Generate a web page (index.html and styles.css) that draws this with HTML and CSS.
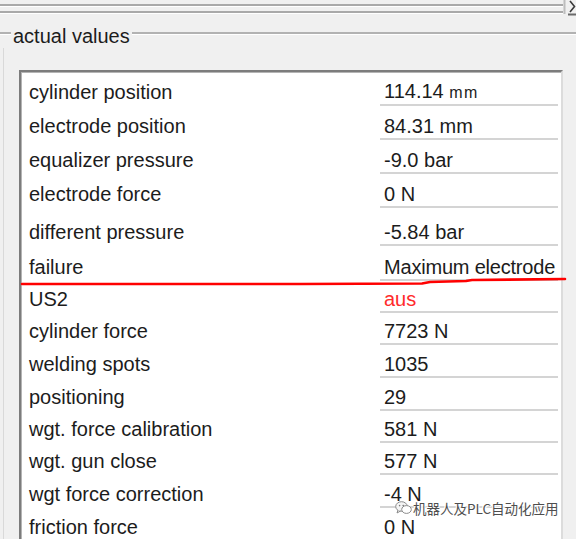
FILE: index.html
```html
<!DOCTYPE html>
<html lang="en">
<head>
<meta charset="utf-8">
<title>actual values</title>
<link rel="stylesheet" href="styles.css">
</head>
<body>
<div class="topbar">
  <div class="rails"><div class="rail"></div><div class="rail"></div></div>
  <div class="cap">
    <svg width="13" height="25" viewBox="0 0 13 25">
      <path d="M1.5 0 V14" stroke="#bdbdbd" stroke-width="2" fill="none"/>
      <path d="M7 1 L11.5 6.5 L7 12" stroke="#3a3a3a" stroke-width="1.6" fill="none"/>
      <path d="M5 14.5 H13" stroke="#6a6a6a" stroke-width="2" fill="none"/>
    </svg>
  </div>
</div>
<section class="group">
  <div class="group-head">
    <span class="edge edge-short"></span>
    <h2 class="legend">actual values</h2>
    <span class="edge edge-long"></span>
  </div>
  <div class="group-body">
    <div class="list">
      <div class="row"><span class="label">cylinder position</span><span class="value">114.14 <span class="unit-small">mm</span></span></div>
      <div class="row"><span class="label">electrode position</span><span class="value">84.31 mm</span></div>
      <div class="row"><span class="label">equalizer pressure</span><span class="value">-9.0 bar</span></div>
      <div class="row"><span class="label">electrode force</span><span class="value">0 N</span></div>
      <div class="row"><span class="label">different pressure</span><span class="value">-5.84 bar</span></div>
      <div class="row"><span class="label">failure</span><span class="value value-tight">Maximum electrode</span></div>
      <div class="row"><span class="label">US2</span><span class="value off">aus</span></div>
      <div class="row"><span class="label">cylinder force</span><span class="value">7723 N</span></div>
      <div class="row"><span class="label">welding spots</span><span class="value">1035</span></div>
      <div class="row"><span class="label">positioning</span><span class="value">29</span></div>
      <div class="row"><span class="label">wgt. force calibration</span><span class="value">581 N</span></div>
      <div class="row"><span class="label">wgt. gun close</span><span class="value">577 N</span></div>
      <div class="row"><span class="label">wgt force correction</span><span class="value">-4 N</span></div>
      <div class="row"><span class="label">friction force</span><span class="value">0 N</span></div>
    </div>
  </div>
</section>
<svg class="annotation" width="576" height="539" viewBox="0 0 576 539">
  <polyline points="22,284 300,284 422,283.5 430,282 466,281 472,280 565,279" fill="none" stroke="#ff0000" stroke-width="2.6" stroke-linecap="round" stroke-linejoin="round"/>
</svg>
<div class="watermark">
  <svg class="wm-icon" width="17" height="14" viewBox="0 0 17 14">
    <ellipse cx="6.5" cy="5.5" rx="5.8" ry="4.8" fill="#f4f4f4" stroke="#8a8a8a" stroke-width="1"/>
    <path d="M3 9 L2 12 L5.5 10" fill="#f4f4f4" stroke="#8a8a8a" stroke-width="1"/>
    <ellipse cx="11.5" cy="8.5" rx="4.8" ry="3.9" fill="#ffffff" stroke="#8a8a8a" stroke-width="1"/>
    <circle cx="4.6" cy="4.6" r="0.8" fill="#777"/>
    <circle cx="8.2" cy="4.6" r="0.8" fill="#777"/>
  </svg>
  <span class="wm-text">机器人及PLC自动化应用</span>
</div>
</body>
</html>
```
FILE: styles.css
```css
* { box-sizing: border-box; }
html, body { margin: 0; padding: 0; }
body {
  width: 576px;
  height: 539px;
  overflow: hidden;
  position: relative;
  background: #f0f0f0;
  font-family: "Liberation Sans", Arial, sans-serif;
  color: #1c1c1c;
}

.topbar { display: flex; height: 25px; }
.rails {
  flex: 1;
  padding-top: 4px;
  display: flex;
  flex-direction: column;
  gap: 4px;
}
.rail {
  height: 3px;
  border-top: 2px solid #a9a9a9;
  border-bottom: 1px solid #ffffff;
}
.cap { width: 13px; }
.cap svg { display: block; }

.group-head { display: flex; align-items: flex-start; height: 23px; }
.edge {
  height: 3px;
  margin-top: 7px;
  border-top: 2px solid #b2b2b2;
  border-bottom: 1px solid #ffffff;
}
.edge-short { width: 11px; }
.edge-long { flex: 1; }
.legend {
  margin: 0;
  padding: 0 2px;
  font-size: 20px;
  font-weight: normal;
  line-height: 23px;
  color: #1c1c1c;
}

.group-body {
  margin-left: 3px;
  border-left: 1px solid #d9d9d9;
  padding: 22px 0 0 15px;
}

.list {
  width: 544px;
  background: #ffffff;
  border-top: 2px solid #7c7c7c;
  border-left: 2px solid #7c7c7c;
  border-right: 2px solid #dcdcdc;
  padding-right: 3px;
  box-shadow: inset 1px 1px 0 #b4b4b4;
}

.row {
  display: grid;
  grid-template-columns: 359px 1fr;
  height: 33px;
  font-size: 20px;
  line-height: 23px;
}
.row:nth-child(1),
.row:nth-child(2),
.row:nth-child(3),
.row:nth-child(4) { height: 34px; }
.row:nth-child(5) { height: 38px; }
.row:nth-child(6) { height: 35px; }
.row:nth-child(7),
.row:nth-child(8),
.row:nth-child(11),
.row:nth-child(12) { height: 32px; }

.label,
.value {
  align-self: end;
  white-space: nowrap;
  overflow: hidden;
  border-bottom: 2px solid transparent;
}
.label { padding-left: 8px; }
.value {
  padding-left: 4px;
  border-bottom-color: #d4d4d4;
}
.value-tight { letter-spacing: -0.2px; }
.unit-small { font-size: 16px; letter-spacing: 1.5px; }
.off { color: #ff2b2b; }

.annotation {
  position: absolute;
  left: 0;
  top: 0;
  pointer-events: none;
}

.watermark {
  position: absolute;
  left: 395px;
  top: 500px;
  display: flex;
  align-items: center;
  gap: 1px;
}
.wm-icon { display: block; }
.wm-text {
  font-family: "Noto Sans CJK SC", sans-serif;
  font-size: 13.5px;
  line-height: 16px;
  color: #4e4e4e;
  text-shadow: 0 0 2px #fff, 0 0 2px #fff, 1px 1px 0 #fff, -1px -1px 0 #fff;
}
```
